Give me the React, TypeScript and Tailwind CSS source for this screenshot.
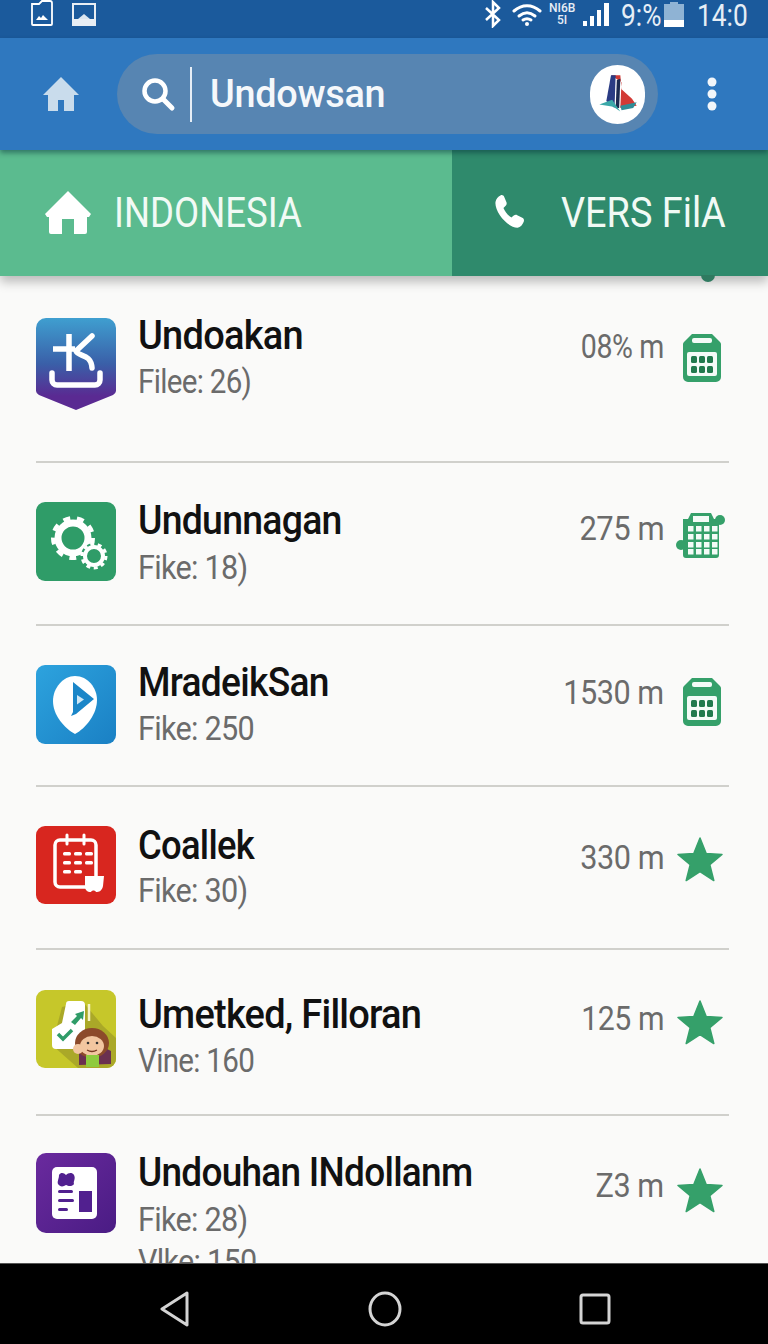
import { ReactNode } from "react";

function BagCalendar() {
  return (
    <svg width="40" height="50" viewBox="0 0 40 50">
      <path d="M10 1h20l8 8a3 3 0 0 1 1 2v33a5 5 0 0 1-5 5H6a5 5 0 0 1-5-5V11a3 3 0 0 1 1-2z" fill="#35a06a" />
      <rect x="10" y="5" width="20" height="5" rx="2" fill="#f4fbf7" />
      <rect x="5" y="19" width="30" height="24" rx="2" fill="#f4fbf7" />
      {[9, 17, 25].map((x) =>
        [23, 33].map((y) => <rect key={`${x}-${y}`} x={x} y={y} width="6" height="7" rx="1.5" fill="#217a4d" />)
      )}
    </svg>
  );
}

function GridCalendar() {
  return (
    <svg width="52" height="48" viewBox="0 0 52 48">
      <path d="M13 8l3-6h20l3 6h5v36a3 3 0 0 1-3 3H11a3 3 0 0 1-3-3V8z" fill="#35a06a" />
      <rect x="18" y="5" width="16" height="6" fill="#f4fbf7" />
      <circle cx="45" cy="9" r="5" fill="#35a06a" />
      <circle cx="6" cy="34" r="5" fill="#35a06a" />
      {[13, 21, 29, 37].map((x) =>
        [15, 23, 31, 38].map((y) => <rect key={`${x}-${y}`} x={x} y={y} width="5.5" height="5.5" fill="#f4fbf7" />)
      )}
    </svg>
  );
}

function Star() {
  return (
    <svg width="46" height="46" viewBox="0 0 46 46">
      <path d="M23 2l6.200 15.500 15.800 1-12.200 10.200 4 15.800L23 35.500 9.200 44.500l4-15.800L1 18.500l15.800-1z" fill="#35a06a" stroke="#35a06a" strokeWidth="1.500" strokeLinejoin="round" />
    </svg>
  );
}

function KIcon() {
  return (
    <svg width="80" height="93" viewBox="0 0 80 93">
      <defs>
        <linearGradient id="kg" x1="0" y1="0" x2="0" y2="1">
          <stop offset="0" stopColor="#3f9fd0" />
          <stop offset="0.5" stopColor="#3a5fa8" />
          <stop offset="0.85" stopColor="#5a2a92" />
        </linearGradient>
      </defs>
      <path d="M10 0h60a10 10 0 0 1 10 10v62a5 5 0 0 1-3 5L40 92 3 77a5 5 0 0 1-3-5V10A10 10 0 0 1 10 0z" fill="url(#kg)" />
      <g fill="none" stroke="#fff" strokeWidth="5.500" strokeLinecap="round" strokeLinejoin="round">
        <path d="M33 16v37M17 31h22" strokeLinecap="butt" />
        <path d="M56 18L40 33c2 6 15 2 16 17" />
        <path d="M16 55v7a5 5 0 0 0 5 5h38a5 5 0 0 0 5-5v-7" />
      </g>
    </svg>
  );
}

function GearIcon() {
  return (
    <svg width="80" height="79" viewBox="0 0 80 79">
      <rect width="80" height="79" rx="9" fill="#2f9c68" />
      <circle cx="37" cy="36" r="15" fill="none" stroke="#fff" strokeWidth="7" />
      <circle cx="37" cy="36" r="20" fill="none" stroke="#fff" strokeWidth="4" strokeDasharray="7 6.960" />
      <circle cx="58" cy="54" r="13" fill="#2f9c68" />
      <circle cx="58" cy="54" r="9" fill="none" stroke="#fff" strokeWidth="4" />
      <circle cx="58" cy="54" r="12" fill="none" stroke="#fff" strokeWidth="3" strokeDasharray="4 3.500" />
    </svg>
  );
}

function PlayIcon() {
  return (
    <svg width="80" height="79" viewBox="0 0 80 79">
      <defs>
        <linearGradient id="pg" x1="0" y1="0" x2="1" y2="1">
          <stop offset="0" stopColor="#2da3de" />
          <stop offset="1" stopColor="#1a80c4" />
        </linearGradient>
      </defs>
      <rect width="80" height="79" rx="9" fill="url(#pg)" />
      <path d="M39 11c13 0 22 12 22 24 0 14-11 28-22 34C28 63 17 50 17 36c0-13 10-25 22-25z" fill="#fff" />
      <path d="M37 17l21 17-18 15-5 2 2-4z" fill="#1b86c8" />
      <path d="M41 30l7 4.500-7 5z" fill="#cfe8f6" />
    </svg>
  );
}

function RedCalendarIcon() {
  const dashes = [
    [27, 26], [38, 26], [49, 26],
    [27, 35], [38, 35], [49, 35],
    [27, 44], [38, 44],
  ];
  return (
    <svg width="80" height="78" viewBox="0 0 80 78">
      <rect width="80" height="78" rx="9" fill="#d8261f" />
      <rect x="19" y="14" width="41" height="47" rx="5" fill="none" stroke="#fff" strokeWidth="3.500" />
      <path d="M31 9v9M48 9v9" stroke="#fff" strokeWidth="3" strokeLinecap="round" />
      {dashes.map(([x, y]) => (
        <rect key={`${x}-${y}`} x={x} y={y} width="8" height="3.500" rx="1.500" fill="#fff" />
      ))}
      <path d="M49 50h19l-1 10c-1 5-4 6-7 6-1-2-4-2-5 0-4 0-6-2-6-6z" fill="#fff" />
    </svg>
  );
}

function YellowIcon() {
  return (
    <svg width="80" height="78" viewBox="0 0 80 78">
      <rect width="80" height="78" rx="9" fill="#c6c72a" />
      <path d="M26 17l21-5 20 24 13 12v21a9 9 0 0 1-9 9H42L16 55z" fill="#aaa828" />
      <path d="M30 14a3 3 0 0 1 3-3h12a4 4 0 0 1 4 4v27l-9 17H20a4 4 0 0 1-4-4V39l10-6z" fill="#fff" />
      <path d="M22 44l5 5 9-9" fill="none" stroke="#2f9c68" strokeWidth="3.500" />
      <path d="M35 32l6-6-2-2 9-3-1 9-2-2-6 7z" fill="#2f9c68" />
      <path d="M53 14v17" stroke="#f5f3c4" strokeWidth="2.500" />
      <path d="M43 75V60l8-4h14l10 5v13z" fill="#6a3050" />
      <ellipse cx="56" cy="53" rx="17" ry="15" fill="#8c4a2a" />
      <ellipse cx="56" cy="56" rx="12" ry="10" fill="#f2c6a0" />
      <circle cx="52" cy="53" r="1.300" fill="#333" />
      <circle cx="61" cy="53" r="1.300" fill="#333" />
      <path d="M51 60q5 3 10 0" fill="none" stroke="#7a3a22" strokeWidth="1.300" />
      <rect x="50" y="65" width="13" height="12" fill="#8ecb3e" />
      <circle cx="42" cy="59" r="5" fill="#f2c6a0" />
    </svg>
  );
}

function PurpleIcon() {
  return (
    <svg width="80" height="80" viewBox="0 0 80 80">
      <defs>
        <linearGradient id="vg" x1="0" y1="0" x2="1" y2="1">
          <stop offset="0" stopColor="#6a2a9e" />
          <stop offset="1" stopColor="#4a1c84" />
        </linearGradient>
      </defs>
      <rect width="80" height="80" rx="10" fill="url(#vg)" />
      <rect x="16" y="14" width="45" height="52" rx="5" fill="#fff" />
      <path d="M23 22c2-3 5-2 7 0 2-2 6-3 8 0 2 4-1 6 0 9-2 3-6 2-8 1-3 2-6 2-8-1-1-3 1-5 1-9z" fill="#51208f" />
      <rect x="22" y="37" width="15" height="3" rx="1.500" fill="#51208f" />
      <rect x="22" y="46" width="16" height="3" rx="1.500" fill="#51208f" />
      <rect x="22" y="55" width="10" height="3" rx="1.500" fill="#51208f" />
      <rect x="43" y="38" width="13" height="21" fill="#51208f" />
    </svg>
  );
}

type Row = {
  rowClass: string;
  textClass: string;
  titleClass: string;
  subClass: string;
  rightClass: string;
  distClass: string;
  iconClass: string;
  title: string;
  sub: string;
  extra?: string;
  dist: string;
  logo: ReactNode;
  mark: ReactNode;
  border: boolean;
};

const rows: Row[] = [
  {
    rowClass: "h-[185px] pt-[42px]", textClass: "-mt-[4px]", titleClass: "scale-x-[0.95]", subClass: "mt-[1px] scale-x-[0.87]",
    rightClass: "pt-[8px]", distClass: "scale-x-[0.84]", iconClass: "mt-[7px] ml-[18px]",
    title: "Undoakan", sub: "Filee: 26)", dist: "08% m", logo: <KIcon />, mark: <BagCalendar />, border: true,
  },
  {
    rowClass: "h-[161px] pt-[39px]", textClass: "-mt-[3px]", titleClass: "scale-x-[0.935]", subClass: "mt-[2px] scale-x-[0.9]",
    rightClass: "pt-[6px]", distClass: "scale-x-[0.91]", iconClass: "mt-[3px] ml-[11px] -mr-[5px]",
    title: "Undunnagan", sub: "Fike: 18)", dist: "275 m", logo: <GearIcon />, mark: <GridCalendar />, border: true,
  },
  {
    rowClass: "h-[159px] pt-[39px]", textClass: "-mt-[4px]", titleClass: "scale-x-[0.93]", subClass: "mt-[1px] scale-x-[0.9]",
    rightClass: "pt-[7px]", distClass: "scale-x-[0.9]", iconClass: "mt-[5px] ml-[18px]",
    title: "MradeikSan", sub: "Fike: 250", dist: "1530 m", logo: <PlayIcon />, mark: <BagCalendar />, border: true,
  },
  {
    rowClass: "h-[161px] pt-[39px]", textClass: "-mt-[2px]", titleClass: "scale-x-[0.91]", subClass: "mt-0 scale-x-[0.9]",
    rightClass: "pt-[11px]", distClass: "scale-x-[0.9]", iconClass: "-mt-[1px] ml-[13px] -mr-[1px]",
    title: "Coallek", sub: "Fike: 30)", dist: "330 m", logo: <RedCalendarIcon />, mark: <Star />, border: true,
  },
  {
    rowClass: "h-[164px] pt-[40px]", textClass: "mt-[3px]", titleClass: "scale-x-[0.95]", subClass: "mt-[1px] scale-x-[0.87]",
    rightClass: "pt-[8px]", distClass: "scale-x-[0.89]", iconClass: "mt-[1px] ml-[13px] -mr-[1px]",
    title: "Umetked, Filloran", sub: "Vine: 160", dist: "125 m", logo: <YellowIcon />, mark: <Star />, border: true,
  },
  {
    rowClass: "h-[147px] pt-[37px]", textClass: "-mt-[2px]", titleClass: "scale-x-[0.925]", subClass: "mt-[2px] scale-x-[0.9]",
    rightClass: "pt-[12px]", distClass: "scale-x-[0.9]", iconClass: "mt-[2px] ml-[13px] -mr-[1px]",
    title: "Undouhan INdollanm", sub: "Fike: 28)", extra: "Vlke: 150", dist: "Z3 m", logo: <PurpleIcon />, mark: <Star />, border: false,
  },
];

function ListRow({ row }: { row: Row }) {
  return (
    <div className={`${row.rowClass} flex shrink-0 justify-between pl-[36px] pr-[46px]`}>
      <div className="flex items-start gap-[22px]">
        {row.logo}
        <div className={row.textClass}>
          <div className={`${row.titleClass} h-[44px] origin-left whitespace-nowrap text-[40px] font-medium leading-[44px] tracking-[-0.8px] text-[#111]`}>
            {row.title}
          </div>
          <div className={`${row.subClass} h-[44px] origin-left whitespace-nowrap text-[34px] leading-[44px] tracking-[-0.8px] text-[#6b6b6b]`}>
            {row.sub}
          </div>
          {row.extra && (
            <div className="h-[40px] origin-left scale-x-[0.9] whitespace-nowrap text-[34px] leading-[40px] tracking-[-0.8px] text-[#6b6b6b]">
              {row.extra}
            </div>
          )}
        </div>
      </div>
      <div className={`${row.rightClass} flex items-start`}>
        <span className={`${row.distClass} origin-right whitespace-nowrap text-[34px] leading-[40px] tracking-[-0.5px] text-[#6b6b6b]`}>{row.dist}</span>
        <span className={row.iconClass}>{row.mark}</span>
      </div>
    </div>
  );
}

function Divider() {
  return <div className="ml-[36px] mr-[39px] h-[2px] shrink-0 bg-[#d0d0cc]" />;
}

export default function App() {
  return (
    <div className="flex h-[1344px] w-[768px] flex-col overflow-hidden bg-[#fafaf9] font-['Roboto',sans-serif]">
      {/* status bar */}
      <div className="flex h-[38px] shrink-0 justify-between bg-[#1b5a9c] pl-[30px] pr-[13px] text-white">
        <div className="flex items-start gap-[18px]">
          <svg width="24" height="26" viewBox="0 0 24 26">
            <path d="M2 4h7l3-3h8a2 2 0 0 1 2 2v21a1 1 0 0 1-1 1H3a1 1 0 0 1-1-1z" fill="none" stroke="#fff" strokeWidth="1.800" />
            <path d="M6 20l3-4 2 2 2-3 3 3 2 2z" fill="#fff" />
          </svg>
          <svg className="mt-[3px]" width="24" height="23" viewBox="0 0 24 23">
            <rect x="0" y="0" width="24" height="23" fill="#e8eef4" />
            <rect x="2" y="2" width="20" height="14" fill="#1b5a9c" />
            <path d="M6 16l6-5 6 5z" fill="#dbe6f0" />
          </svg>
        </div>
        <div className="flex items-start">
          <svg width="20" height="28" viewBox="0 0 20 28">
            <path d="M3 8l13 12-6 6V2l6 6L3 20" fill="none" stroke="#fff" strokeWidth="2.500" />
          </svg>
          <svg className="ml-[9px] mt-[3px]" width="30" height="24" viewBox="0 0 30 24">
            <g fill="none" stroke="#fff" strokeWidth="3" strokeLinecap="round">
              <path d="M2 8c8-7 18-7 26 0" />
              <path d="M7 13c5-4 11-4 16 0" />
              <path d="M11 17c3-2 5-2 8 0" />
            </g>
            <circle cx="15" cy="21" r="2" fill="#fff" />
          </svg>
          <div className="ml-[7px] mt-[2px] w-[26px] text-center text-[12px] font-medium leading-[12px] text-[#e6eef6]">
            <div>NI6B</div>
            <div>5I</div>
          </div>
          <svg className="ml-[7px] mt-[2px]" width="27" height="25" viewBox="0 0 27 25">
            <path d="M1 24v-5h4v5zM8 24V14h4v10zM15 24V8h4v16zM22 24V1h5v23z" fill="#fff" />
          </svg>
          <span className="ml-[12px] mt-[1px] w-[36px] origin-left scale-x-[0.85] text-[31px] leading-[30px] text-[#e6eef6]">9:%</span>
          <svg className="ml-[7px] mt-[2px]" width="20" height="26" viewBox="0 0 20 26">
            <rect y="2" width="20" height="16" fill="#8fb3d4" />
            <rect x="6" width="8" height="2" fill="#8fb3d4" />
            <rect y="18" width="20" height="7" fill="#fff" />
          </svg>
          <span className="ml-[13px] mt-[1px] w-[58px] origin-left scale-x-[0.85] text-[31px] leading-[30px] text-[#e6eef6]">14:0</span>
        </div>
      </div>

      {/* app bar */}
      <div className="relative z-10 flex h-[112px] shrink-0 items-center bg-[#2f78bf] pl-[42px] shadow-[0_3px_5px_rgba(0,40,50,0.45)]">
        <svg width="38" height="36" viewBox="0 0 38 36">
          <path d="M19 1l18 18h-5v16H22V24h-6v11H6V19H1z" fill="#c9dcec" />
        </svg>
        <div className="ml-[37px] flex h-[80px] w-[541px] items-center rounded-full bg-[#5785b2] pl-[23px] pr-[13px]">
          <svg width="36" height="36" viewBox="0 0 36 36">
            <circle cx="15" cy="15" r="10.500" fill="none" stroke="#fff" strokeWidth="4.500" />
            <path d="M23 23l9 9" stroke="#fff" strokeWidth="5" strokeLinecap="round" />
          </svg>
          <div className="ml-[14px] h-[55px] w-[2px] bg-[#e6eef6]" />
          <span className="ml-[18px] origin-left scale-x-[0.97] whitespace-nowrap text-[39px] font-medium leading-none tracking-[-0.3px] text-[#f5f8fb]">Undowsan</span>
          <div className="ml-auto flex h-[59px] w-[55px] items-center justify-center rounded-full bg-white">
            <svg width="42" height="42" viewBox="0 0 34 36">
              <path d="M11 2h8l1 12 9 8 4 6-14 2 1-22z" fill="#d23a35" />
              <path d="M11 2l4 0-1 28-7-6z" fill="#2a3c84" />
              <path d="M16 6l3-1-1 25h-3z" fill="#1b2a50" />
              <path d="M1 27l11-4 7 10-6-4z" fill="#3aa8a8" />
              <path d="M19 28l14-3-3 5-10 2z" fill="#2f8c96" />
            </svg>
          </div>
        </div>
        <svg className="ml-[48px]" width="12" height="36" viewBox="0 0 12 36">
          <circle cx="6" cy="6" r="4.500" fill="#f2f6fa" />
          <circle cx="6" cy="18" r="4.500" fill="#f2f6fa" />
          <circle cx="6" cy="30" r="4.500" fill="#f2f6fa" />
        </svg>
      </div>

      {/* tabs */}
      <div className="relative flex h-[126px] shrink-0 shadow-[0_6px_10px_rgba(0,0,0,0.25)]">
        <div className="flex w-[452px] items-center bg-[#5bbb8f] pl-[44px] pb-[2px]">
          <svg width="48" height="44" viewBox="0 0 48 44">
            <path d="M24 1l23 23-2 3h-2v15a2 2 0 0 1-2 2H30V29H18v15H7a2 2 0 0 1-2-2V27H3l-2-3z" fill="#fff" />
          </svg>
          <span className="ml-[22px] origin-left scale-x-[0.85] whitespace-nowrap text-[43px] leading-none text-[#f1faf5]">INDONESIA</span>
        </div>
        <div className="flex flex-1 items-center bg-[#2f8a6c] pl-[38px] pb-[2px]">
          <svg width="38" height="38" viewBox="0 0 24 24">
            <path d="M6.600 1.500c1-.5 2 0 2.400 1l1.400 3.400c.3.8.1 1.600-.5 2.200L8.500 9.400c.9 2.300 2.600 4.500 5 6l1.500-1.200c.7-.5 1.500-.6 2.200-.2l3.200 1.700c1 .5 1.300 1.500.9 2.400-.7 1.800-2 3.600-3.900 3.800C11 22 2.500 11.500 3.500 5.500c.3-1.800 1.600-3.300 3.100-4z" fill="#fff" />
          </svg>
          <span className="ml-[33px] origin-left scale-x-[0.88] whitespace-nowrap text-[43px] leading-none text-[#f1faf5]">VERS FilA</span>
        </div>
        <div className="absolute bottom-[-6px] left-[701px] h-[7px] w-[14px] rounded-b-full bg-[#2f7a60]" />
      </div>

      {/* list */}
      <div className="flex min-h-0 flex-1 flex-col overflow-hidden">
        {rows.map((row) => (
          <div key={row.title} className="contents">
            <ListRow row={row} />
            {row.border && <Divider />}
          </div>
        ))}
      </div>

      {/* nav bar */}
      <div className="flex h-[81px] shrink-0 items-center gap-[177px] border-t border-[#555] bg-black pl-[159px] pt-[9px]">
        <svg width="32" height="36" viewBox="0 0 32 36">
          <path d="M28 2L3 18l25 16z" fill="none" stroke="#d4d4d4" strokeWidth="3" strokeLinejoin="round" />
        </svg>
        <svg width="34" height="36" viewBox="0 0 34 36">
          <ellipse cx="17" cy="18" rx="15" ry="16" fill="none" stroke="#d4d4d4" strokeWidth="3" />
        </svg>
        <svg width="32" height="32" viewBox="0 0 32 32">
          <rect x="2" y="2" width="28" height="28" rx="2" fill="none" stroke="#d4d4d4" strokeWidth="3" />
        </svg>
      </div>
    </div>
  );
}
